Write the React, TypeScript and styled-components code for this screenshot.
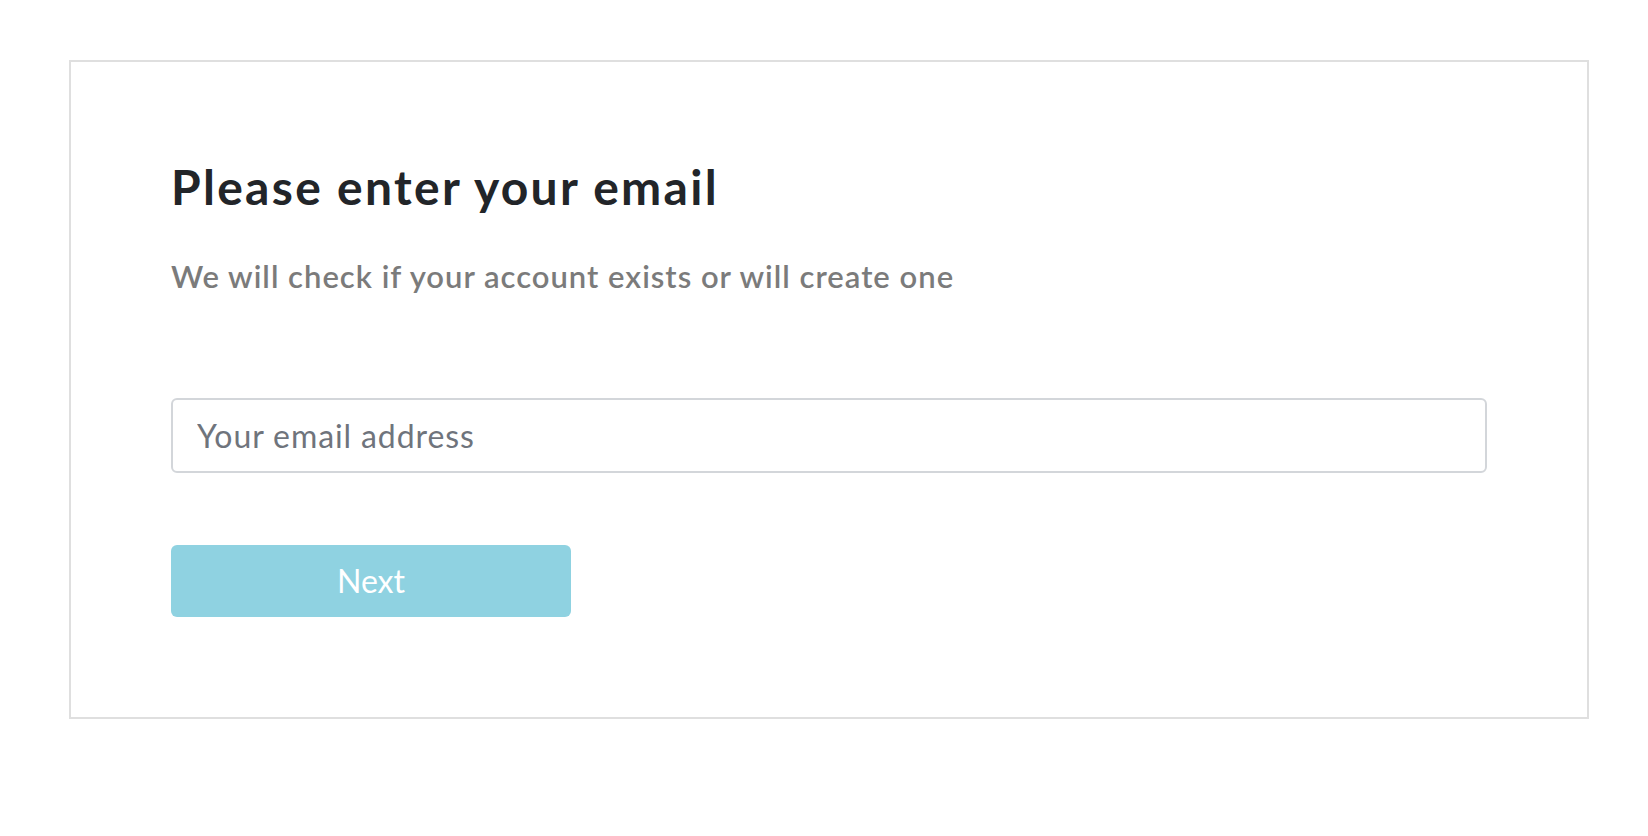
import React from "react";
import styled, { createGlobalStyle } from "styled-components";

const GlobalStyle = createGlobalStyle`
  html, body {
    margin: 0;
    padding: 0;
    background: #ffffff;
    font-family: Lato, "Open Sans", sans-serif;
  }
  * { box-sizing: border-box; }
`;

const Page = styled.main`
  padding: 60px 59px 0 69px;
`;

const Card = styled.section`
  border: 2px solid #dfdfdf;
  background: #fff;
  padding: 96px 100px 100px 100px;
  display: flex;
  flex-direction: column;
`;

const Title = styled.h1`
  margin: 0;
  font-family: Lato, sans-serif;
  font-weight: 700;
  font-size: 48px;
  line-height: 1.2;
  letter-spacing: 2.3px;
  color: #222529;
`;

const Subtitle = styled.p`
  margin: 42px 0 0 0;
  font-family: Lato, sans-serif;
  font-weight: 600;
  font-size: 31px;
  line-height: 1.2;
  letter-spacing: 1px;
  color: #7b7b7b;
`;

const Form = styled.form`
  margin-top: 103px;
  display: flex;
  flex-direction: column;
  align-items: flex-start;
  gap: 72px;
`;

const EmailInput = styled.input`
  width: 100%;
  height: 75px;
  border: 2px solid #d3d6da;
  border-radius: 6px;
  padding: 0 24px;
  font-family: Lato, sans-serif;
  font-size: 32px;
  font-weight: 400;
  letter-spacing: 0.9px;
  color: #23262b;
  outline: none;
  &::placeholder {
    color: #6f747c;
    opacity: 1;
  }
`;

const NextButton = styled.button`
  width: 400px;
  height: 72px;
  border: none;
  border-radius: 6px;
  background: #8fd2e1;
  color: #ffffff;
  font-family: Lato, sans-serif;
  font-size: 32px;
  font-weight: 400;
  cursor: pointer;
`;

export default function App() {
  return (
    <>
      <GlobalStyle />
      <Page>
        <Card>
          <Title>Please enter your email</Title>
          <Subtitle>We will check if your account exists or will create one</Subtitle>
          <Form onSubmit={(e) => e.preventDefault()}>
            <EmailInput type="email" placeholder="Your email address" />
            <NextButton type="submit">Next</NextButton>
          </Form>
        </Card>
      </Page>
    </>
  );
}
